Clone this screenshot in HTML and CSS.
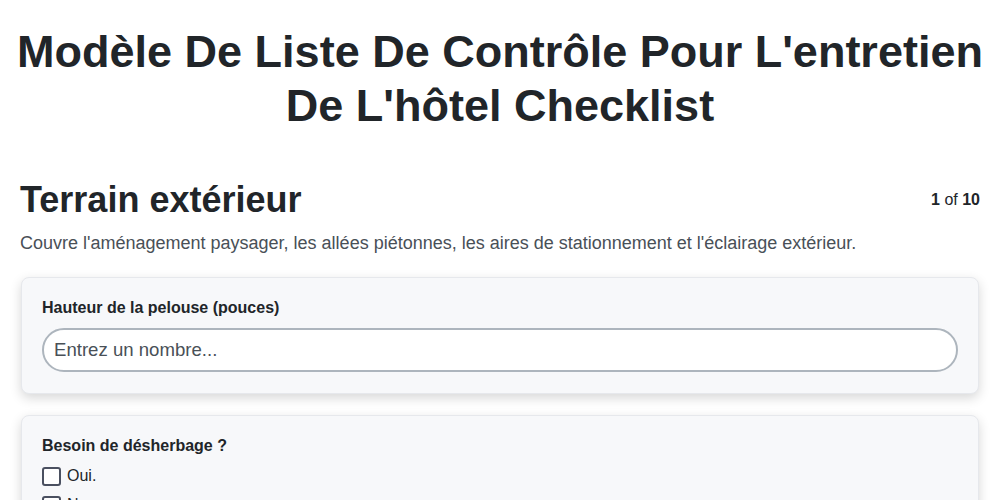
FILE: index.html
```html
<!DOCTYPE html>
<html lang="fr">
<head>
    <meta charset="UTF-8">
    <meta name="viewport" content="width=device-width, initial-scale=1.0">
    <title>Modèle De Liste De Contrôle Pour L'entretien De L'hôtel Checklist</title>
    <link rel="stylesheet" href="styles.css">
</head>
<body>
    <div class="page">
        <h1 class="page-title">Modèle De Liste De Contrôle Pour L'entretien De L'hôtel Checklist</h1>

        <div class="section-header">
            <h2 class="section-title">Terrain extérieur</h2>
            <div class="section-count"><strong>1</strong> of <strong>10</strong></div>
        </div>
        <p class="section-desc">Couvre l'aménagement paysager, les allées piétonnes, les aires de stationnement et l'éclairage extérieur.</p>

        <div class="field-card">
            <label class="field-label" for="lawnHeight">Hauteur de la pelouse (pouces)</label>
            <input class="text-input" type="number" id="lawnHeight" placeholder="Entrez un nombre...">
        </div>

        <div class="field-card">
            <div class="field-label">Besoin de désherbage ?</div>
            <label class="check-row"><input type="checkbox" class="check-box"> Oui.</label>
            <label class="check-row"><input type="checkbox" class="check-box"> Non.</label>
        </div>
    </div>
</body>
</html>
```

FILE: styles.css
```css
* {
    margin: 0;
    padding: 0;
    box-sizing: border-box;
}

body {
    font-family: 'Liberation Sans', Arial, sans-serif;
    background: #fff;
    color: #212529;
}

.page {
    padding: 25px 20px 20px;
}

.page-title {
    text-align: center;
    font-size: 45px;
    line-height: 54px;
    font-weight: bold;
    color: #212529;
    margin: 0 -10px 45px;
}

.section-header {
    display: flex;
    justify-content: space-between;
    align-items: center;
    margin-bottom: 12px;
}

.section-title {
    font-size: 36px;
    line-height: 43px;
    font-weight: bold;
}

.section-count {
    font-size: 16px;
    color: #212529;
}

.section-desc {
    font-size: 18px;
    line-height: 21px;
    color: #495057;
    margin-bottom: 23px;
}

.field-card {
    background: #f7f8fa;
    border: 1px solid #e6e8ec;
    border-radius: 8px;
    padding: 20px 20px 21px;
    margin: 0 1px 21px;
    box-shadow: 0 4px 12px rgba(0, 0, 0, 0.16);
}

.field-label {
    display: block;
    font-size: 16px;
    line-height: 19px;
    font-weight: bold;
    color: #212529;
    margin-bottom: 11px;
}

.text-input {
    display: block;
    width: 100%;
    height: 44px;
    padding: 0 10px;
    font-family: inherit;
    font-size: 18.6px;
    border: 2px solid #adb5bd;
    border-radius: 22px;
    background: #fff;
    outline: none;
}

.text-input::placeholder {
    color: #495057;
}

.check-row {
    display: flex;
    align-items: center;
    gap: 6px;
    font-size: 16px;
    color: #212529;
    height: 20px;
    margin-bottom: 9px;
}

.check-box {
    appearance: none;
    width: 19px;
    height: 19px;
    border: 2px solid #4a5060;
    border-radius: 3px;
    background: #fff;
}
```
